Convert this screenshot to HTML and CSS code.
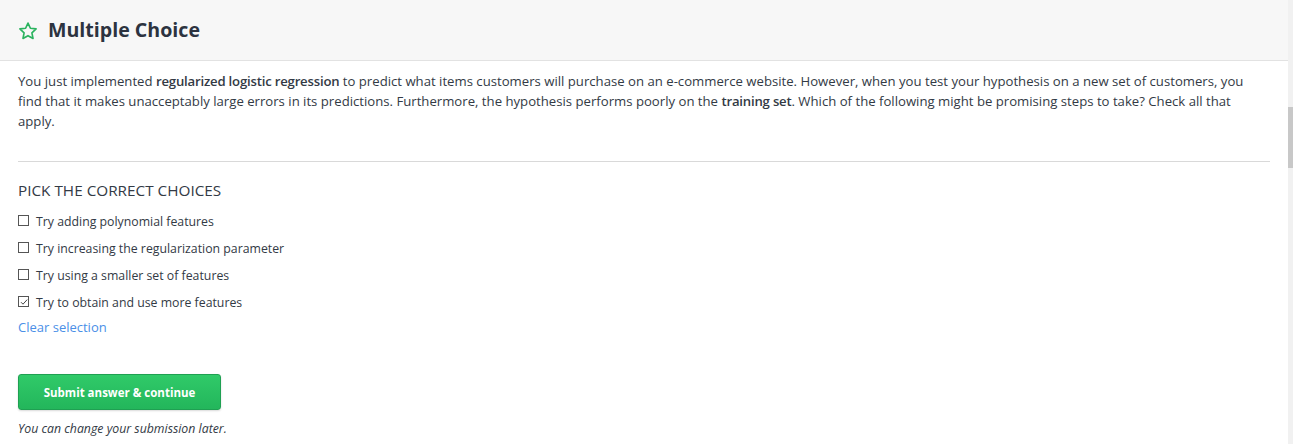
FILE: index.html
```html
<!DOCTYPE html>
<html>
<head>
<meta charset="utf-8">
<link rel="stylesheet" href="styles.css">
</head>
<body>
<div class="frame">
  <div class="page">
    <header class="head">
      <svg class="star" width="20" height="20" viewBox="0 0 24 24" fill="none" stroke="#2bb35f" stroke-width="2" stroke-linejoin="round">
        <path d="M12 2.5l2.9 6.2 6.8.8-5 4.7 1.3 6.7L12 17.6l-6 3.3 1.3-6.7-5-4.7 6.8-.8z"/>
      </svg>
      <h1 class="title">Multiple Choice</h1>
    </header>
    <main class="content">
      <p class="question">You just implemented <b>regularized logistic regression</b> to predict what items customers will purchase on an e-commerce website. However, when you test your hypothesis on a new set of customers, you find that it makes unacceptably large errors in its predictions. Furthermore, the hypothesis performs poorly on the <b>training set</b>. Which of the following might be promising steps to take? Check all that apply.</p>
      <hr class="rule">
      <h2 class="pick">Pick the correct choices</h2>
      <ul class="choices">
        <li class="choice"><span class="box"></span>Try adding polynomial features</li>
        <li class="choice"><span class="box"></span>Try increasing the regularization parameter</li>
        <li class="choice"><span class="box"></span>Try using a smaller set of features</li>
        <li class="choice"><span class="box checked"><svg width="8" height="8" viewBox="0 0 8 8"><path d="M1 4.2l2 2L7.2 1.6" fill="none" stroke="#444" stroke-width="1"/></svg></span>Try to obtain and use more features</li>
      </ul>
      <a class="clear" href="#">Clear selection</a>
      <div class="actions">
        <button class="submit">Submit answer &amp; continue</button>
        <p class="note">You can change your submission later.</p>
      </div>
    </main>
  </div>
  <div class="scrollbar"><div class="thumb"></div></div>
</div>
</body>
</html>
```
FILE: styles.css
```css
html, body {
  margin: 0;
  padding: 0;
  background: #fff;
  height: 444px;
  overflow: hidden;
}
body {
  font-family: "Open Sans", "Noto Sans", sans-serif;
  color: #333a45;
}
.frame {
  display: flex;
  height: 444px;
}
.page {
  flex: 1;
  min-width: 0;
}
.scrollbar {
  width: 5px;
  background: #f1f1f1;
  display: flex;
  flex-direction: column;
}
.thumb {
  margin-top: 107px;
  height: 61px;
  background: #c8c8c8;
}
.head {
  height: 60px;
  background: #f7f7f7;
  border-bottom: 1px solid #e2e2e2;
  display: flex;
  align-items: center;
  padding-left: 18px;
  gap: 10px;
}
.star {
  display: block;
  margin-top: 1px;
}
.title {
  margin: 0 0 1px 0;
  font-size: 19.6px;
  font-weight: 700;
  color: #2c3340;
}
.content {
  padding: 10px 18px 0 18px;
}
.question {
  margin: 0;
  font-size: 13.17px;
  line-height: 20px;
}
.question b {
  font-weight: 600;
  letter-spacing: -0.2px;
}
.rule {
  margin: 30px 0 0 0;
  border: 0;
  border-top: 1px solid #d9d9d9;
  height: 0;
}
.pick {
  margin: 18px 0 0 0;
  font-size: 15.3px;
  line-height: 20px;
  font-weight: 400;
  text-transform: uppercase;
}
.choices {
  list-style: none;
  margin: 8px 0 0 0;
  padding: 0;
}
.choice {
  display: flex;
  align-items: center;
  height: 27px;
  font-size: 12.3px;
}
.box {
  width: 9px;
  height: 9px;
  border: 1px solid #555;
  margin-right: 7px;
  display: flex;
  align-items: center;
  justify-content: center;
  flex: none;
  margin-top: -2px;
}
.box svg {
  display: block;
}
.clear {
  display: block;
  font-size: 13px;
  line-height: 18px;
  color: #4a8fe7;
  text-decoration: none;
  margin-top: 2px;
}
.actions {
  margin-top: 38px;
}
.submit {
  display: block;
  width: 203px;
  height: 36px;
  border: 1px solid #1fa052;
  border-radius: 3px;
  background: linear-gradient(#30ca69, #23b65b);
  color: #fff;
  font-family: "Open Sans", sans-serif;
  font-weight: 700;
  font-size: 11.5px;
  box-shadow: 0 1px 2px rgba(0,0,0,0.15);
  padding: 0;
}
.note {
  margin: 11px 0 0 0;
  font-size: 12.3px;
  font-style: italic;
  line-height: 16px;
}
```
